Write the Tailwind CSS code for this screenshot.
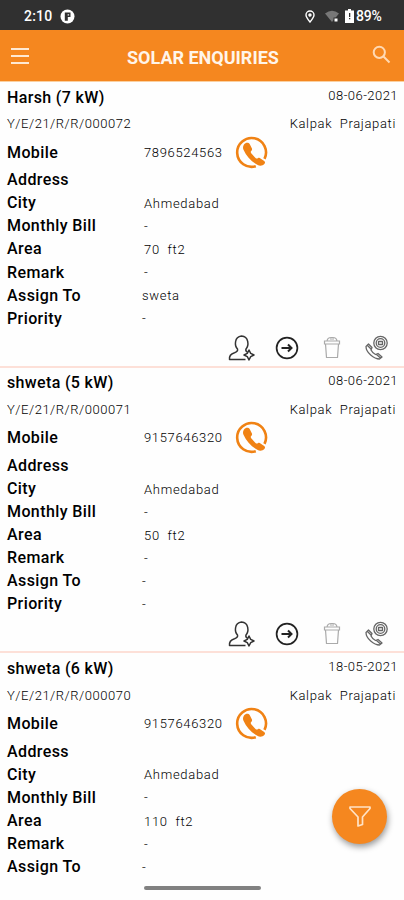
<!DOCTYPE html>
<html lang="en">
<head>
<meta charset="utf-8">
<meta name="viewport" content="width=device-width, initial-scale=1">
<title>Solar Enquiries</title>
<script src="https://cdn.jsdelivr.net/npm/@tailwindcss/browser@4"></script>
</head>
<body class="h-[900px] overflow-hidden bg-[#fefefe] font-['Roboto','Liberation_Sans',sans-serif] text-black">
<div class="relative flex h-[900px] w-[404px] flex-col overflow-hidden">
  <div class="flex h-[30px] shrink-0 items-center bg-[#303030] pl-6 pr-[22px] pt-[2px] text-[14px] font-medium text-white">
    <span class="w-[29px] tracking-[0.2px]">2:10</span>
    <svg class="ml-[7px] size-[15px]" viewBox="0 0 15 15"><circle cx="7.5" cy="7.5" r="7" fill="#fff"/><path d="M4.800 11.800V3.500h5.700V8H7.800v3.800z" fill="#303030"/><path d="M7.600 5.300h1.500v1.200H7.600z" fill="#fff"/></svg>
    <span class="grow"></span>
    <svg class="h-[13px] w-[10px]" viewBox="0 0 10 13" fill="none" stroke="#fff" stroke-width="1.4"><path d="M5 12C2.500 9 1 7.200 1 5a4 4 0 0 1 8 0c0 2.200-1.500 4-4 7z"/><circle cx="5" cy="5" r="1" fill="#fff"/></svg>
    <svg class="ml-[10px] h-[13px] w-[14px]" viewBox="0 0 14 13"><path d="M0 3.500Q7-2 14 3.500L7 12z" fill="#777"/><path d="M8.500 7.500h5v5h-5z" fill="#303030"/><path d="M9.500 8.500h3v3h-3z" fill="#fff"/></svg>
    <svg class="ml-[6px] h-[14px] w-[9px]" viewBox="0 0 9 14"><path d="M3 0h3v1.500h3V14H0V1.500h3z" fill="#fff"/><path d="M4 4h1.300v4H4zm0 5h1.300v1.300H4z" fill="#303030"/></svg>
    <span class="ml-[2px] w-[26px] whitespace-nowrap text-[14px] tracking-[-0.2px]">89%</span>
  </div>
  <header class="flex h-[52px] shrink-0 items-center border-b border-[#fbd0a0] bg-[#f5871f] pl-[11px] pr-[13px] pb-px">
    <svg class="mt-px size-[18px]" viewBox="0 0 18 18" stroke="#ffe9d2" stroke-width="2"><path d="M0 2h18M0 9h18M0 16h18"/></svg>
    <h1 class="ml-[98px] mt-[4px] whitespace-nowrap text-[18px] font-bold text-[#fff5ea]">SOLAR ENQUIRIES</h1>
    <span class="grow"></span>
    <svg class="mb-[2px] size-[19px]" viewBox="0 0 19 19" fill="none" stroke="#ffd9b3" stroke-width="2"><circle cx="7.300" cy="7.300" r="5.600"/><path d="m11.500 11.500 6 6"/></svg>
  </header>
  <main id="list" class="flex h-[796px] shrink-0 flex-col overflow-hidden"></main>
  <button class="absolute left-[332px] top-[789px] flex size-[55px] items-center justify-center rounded-full bg-[#f5871f] shadow-[1px_3px_6px_rgba(0,0,0,0.4)]" aria-label="Filter">
    <svg class="h-[21px] w-[22px]" viewBox="0 0 22 21" fill="none" stroke="#ffe3c7" stroke-width="1.700" stroke-linejoin="round"><path d="M1 1h20v1.500L13.500 11v7.500l-4.500 1.500v-9L1 2.500z"/></svg>
  </button>
  <div class="absolute left-[144px] top-[886px] h-[4px] w-[117px] rounded-full bg-[#818181]"></div>
</div>

<template id="card">
  <article class="flex h-[285.7px] shrink-0 flex-col border-b-2 border-[#fde0d8]">
    <div class="flex h-[30px] shrink-0 items-center justify-between pl-[7px] pr-[6px] pt-px">
      <h2 data-f="name" class="whitespace-nowrap text-[16px] font-medium tracking-[0.35px]"></h2>
      <span data-f="date" class="relative -top-[2px] text-[13px] font-light tracking-[0.45px]"></span>
    </div>
    <div class="flex h-[24px] shrink-0 items-center justify-between pl-[7px] pr-[8px] text-[13px] font-light">
      <span data-f="ref" class="tracking-[0.53px]"></span>
      <span data-f="owner" class="whitespace-pre tracking-[0.65px]"></span>
    </div>
    <div class="flex h-[32px] shrink-0 items-center pl-[7px]">
      <span class="w-[137px] pt-px text-[16px] font-medium tracking-[0.4px]">Mobile</span>
      <span data-f="mobile" class="w-[91px] pt-px text-[13px] font-light tracking-[0.65px]"></span>
      <svg class="size-[33px]" viewBox="0 0 33 33"><path d="M29.500 22.800A14.400 14.400 0 1 0 20.800 30.200" fill="none" stroke="#f08214" stroke-width="2.600"/><path d="M9 8.500c1.500-2.200 4.500-2.500 5.800-.3l2 4c.6 1.300.2 2-.6 2.800-.7.700-.6 1.400 0 2.200l4.300 4.700c.8.8 1.500.9 2.300.4.900-.6 1.800-.6 2.700.1l3.700 2.600c1.200.9 1 2.100.1 3.100-1.800 1.900-4.600 2-7 .7C16 25.300 11.300 20.300 8.500 13.800c-.8-2-.6-3.800.5-5.300z" fill="#f08214"/></svg>
    </div>
    <dl data-rows class="pt-[0.6px]"></dl>
    <div class="flex grow items-center pl-[228px]">
      <svg class="h-[28px] w-[28px]" viewBox="0 0 28 28" fill="none" stroke="#333" stroke-width="1.500" stroke-linejoin="round"><path d="M17.500 25.500H1.500c-.5-4 1-5.600 5-6.800 3-1 3.500-2 3-3.700C6.500 12 6 3 13.500 2c7.500.500 7.500 9.500 4.500 13-.5 1.500 0 2.500 1.500 3.200"/><path d="M21 16l1.700 3.300 3.300 1.700-3.300 1.700-1.700 3.300-1.700-3.300-3.300-1.700 3.300-1.700z"/></svg>
      <svg class="ml-[19px] size-[24px]" viewBox="0 0 24 24" fill="none" stroke="#222" stroke-width="1.700"><circle cx="12" cy="12" r="10.400"/><path d="M6.500 12h10M13 8.500l3.500 3.500-3.500 3.500" stroke-width="2"/></svg>
      <svg class="ml-[24px] h-[23px] w-[18px]" viewBox="0 0 18 23" fill="none" stroke="#aaa" stroke-width="1.200"><path d="M1.500 5h15v3h-15zM2.500 8l1 13.500h11l1-13.500M4 5c.5-4 3-3.500 5-3.500S13.500 1 14 5M7 3h4"/></svg>
      <svg class="ml-[24px] h-[25px] w-[25px]" viewBox="0 0 25 25" fill="none" stroke="#666" stroke-width="1.300" stroke-linejoin="round"><circle cx="15.500" cy="8" r="6.700"/><circle cx="15.500" cy="8" r="4.300"/><path d="M13.500 6.500h4v3h-4z"/><path d="M1 11.500l2.500-2.500 3.500 3.500-1 2.500c1 2 2.500 3.500 4.500 4.500l2.500-1 4 3.500-2.500 2C9 24 1 17.500 1 11.500zM2.500 10.500l3.500 3.500M11.500 19.500l4 3.500"/></svg>
    </div>
  </article>
</template>
<template id="row">
  <div class="flex h-[23.1px] items-center pl-[7px]">
    <dt class="w-[137px] whitespace-nowrap text-[16px] font-medium tracking-[0.4px]"></dt>
    <dd class="whitespace-pre pt-px text-[13px] font-light tracking-[0.7px]"></dd>
  </div>
</template>
<script>
const enquiries = [
  { name: 'Harsh (7 kW)', date: '08-06-2021', ref: 'Y/E/21/R/R/000072', mobile: '7896524563', area: '70  ft2', assign: 'sweta', priority: '-' },
  { name: 'shweta (5 kW)', date: '08-06-2021', ref: 'Y/E/21/R/R/000071', mobile: '9157646320', area: '50  ft2', assign: '-', priority: '-' },
  { name: 'shweta (6 kW)', date: '18-05-2021', ref: 'Y/E/21/R/R/000070', mobile: '9157646320', area: '110  ft2', assign: '-' }
];
const list = document.getElementById('list');
for (const e of enquiries) {
  const card = document.getElementById('card').content.cloneNode(true);
  const data = { ...e, owner: 'Kalpak  Prajapati' };
  card.querySelectorAll('[data-f]').forEach(n => n.textContent = data[n.dataset.f]);
  const rows = [['Address', ''], ['City', 'Ahmedabad'], ['Monthly Bill', '-'], ['Area', e.area], ['Remark', '-'], ['Assign To', e.assign]];
  if (e.priority) rows.push(['Priority', e.priority]);
  rows.forEach(([k, v], i) => {
    const r = document.getElementById('row').content.cloneNode(true);
    r.querySelector('dt').textContent = k;
    r.querySelector('dd').textContent = v;
    if (i > 4) r.querySelector('dd').classList.add('-ml-[2px]');
    card.querySelector('[data-rows]').append(r);
  });
  // The last card has its action bar below the visible area.
  if (!e.priority) card.querySelector('[data-rows]').nextElementSibling.remove();
  list.append(card);
}
</script>
</body>
</html>
